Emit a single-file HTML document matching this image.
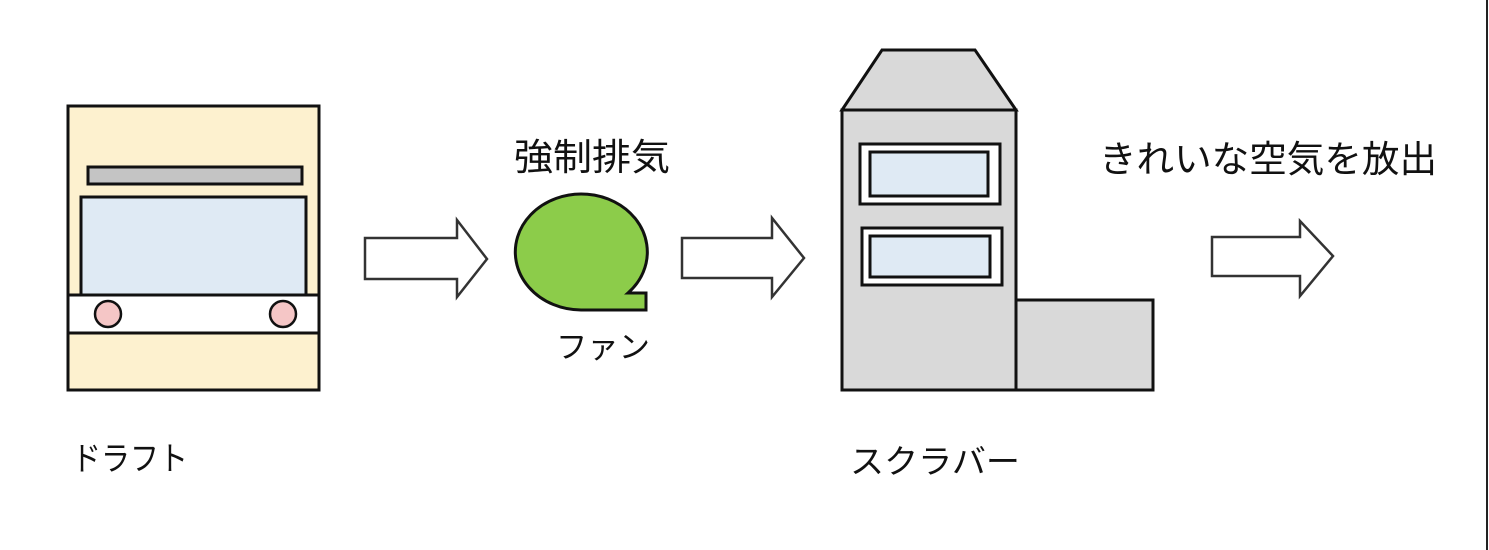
<!DOCTYPE html>
<html><head><meta charset="utf-8"><style>
html,body{margin:0;padding:0;background:#fff;}
svg{display:block}
text{font-family:"Liberation Sans","Noto Sans CJK JP",sans-serif;fill:#111;}
</style></head><body>
<svg width="1489" height="550" viewBox="0 0 1489 550" xmlns="http://www.w3.org/2000/svg">
<rect x="0" y="0" width="1489" height="550" fill="#fff"/>
<!-- draft -->
<rect x="68" y="106" width="251" height="284" fill="#fdf1cf" stroke="#111" stroke-width="3"/>
<rect x="88" y="167" width="214" height="17" fill="#c4c4c4" stroke="#111" stroke-width="3"/>
<rect x="81" y="197" width="225" height="98" fill="#dfeaf4" stroke="#111" stroke-width="3"/>
<rect x="68" y="295" width="251" height="38" fill="#fff" stroke="#111" stroke-width="3"/>
<circle cx="108" cy="314" r="13" fill="#f5c6c6" stroke="#111" stroke-width="2.5"/>
<circle cx="283" cy="314" r="13" fill="#f5c6c6" stroke="#111" stroke-width="2.5"/>
<!-- arrows -->
<path d="M365 238 H457 V220 L487 259 L457 297 V279 H365 Z" fill="#fff" stroke="#333" stroke-width="2.5"/>
<path d="M682 238 H772 V218 L804 258 L772 297 V278 H682 Z" fill="#fff" stroke="#333" stroke-width="2.5"/>
<path d="M1212 237 H1300 V221 L1333 256 L1300 296 V276 H1212 Z" fill="#fff" stroke="#333" stroke-width="2.5"/>
<!-- fan -->
<path d="M628 293 H646 V310 H581 A66 58 0 1 1 628 293 Z" fill="#8ccc4a" stroke="#111" stroke-width="3"/>
<!-- scrubber -->
<path d="M842 110 L882 50 L975 50 L1016 110 Z" fill="#d9d9d9" stroke="#111" stroke-width="3"/>
<rect x="842" y="110" width="174" height="280" fill="#d9d9d9" stroke="#111" stroke-width="3"/>
<rect x="1016" y="300" width="137" height="90" fill="#d9d9d9" stroke="#111" stroke-width="3"/>
<rect x="860" y="144" width="140" height="60" fill="#fff" stroke="#111" stroke-width="3"/>
<rect x="870" y="152" width="118" height="44" fill="#dfeaf4" stroke="#111" stroke-width="3"/>
<rect x="862" y="228" width="140" height="57" fill="#fff" stroke="#111" stroke-width="3"/>
<rect x="870" y="236" width="120" height="41" fill="#dfeaf4" stroke="#111" stroke-width="3"/>
<!-- right edge line -->
<rect x="1486" y="0" width="2" height="550" fill="#222"/>
<!-- text -->
<text x="514" y="170" font-size="37" textLength="156" lengthAdjust="spacingAndGlyphs">強制排気</text>
<text x="556" y="358" font-size="31" textLength="94" lengthAdjust="spacingAndGlyphs">ファン</text>
<text x="72" y="470" font-size="33" textLength="116" lengthAdjust="spacingAndGlyphs">ドラフト</text>
<text x="850" y="473" font-size="33" textLength="170" lengthAdjust="spacingAndGlyphs">スクラバー</text>
<text x="1099" y="172" font-size="37" textLength="338" lengthAdjust="spacingAndGlyphs">きれいな空気を放出</text>
</svg>
</body></html>
